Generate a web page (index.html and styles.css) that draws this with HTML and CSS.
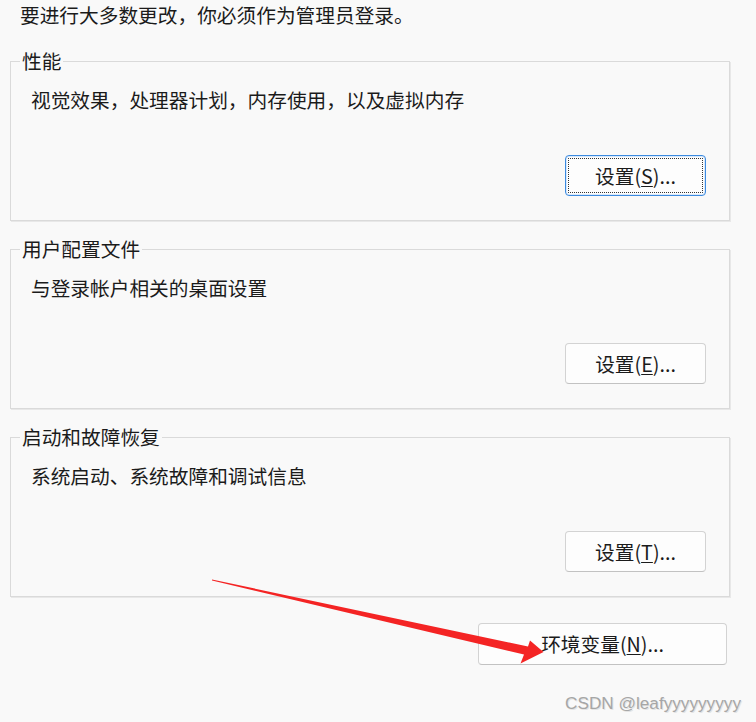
FILE: index.html
```html
<!DOCTYPE html>
<html lang="zh-CN">
<head>
    <meta charset="UTF-8">
    <title>系统属性 - 高级</title>
    <link rel="stylesheet" href="styles.css">
</head>
<body>
    <div class="page">
        <p class="notice">要进行大多数更改，你必须作为管理员登录。</p>

        <fieldset class="group">
            <legend>性能</legend>
            <p class="desc">视觉效果，处理器计划，内存使用，以及虚拟内存</p>
            <div class="actions">
                <button class="btn focused">设置(<u>S</u>)...</button>
            </div>
        </fieldset>

        <fieldset class="group">
            <legend>用户配置文件</legend>
            <p class="desc">与登录帐户相关的桌面设置</p>
            <div class="actions">
                <button class="btn">设置(<u>E</u>)...</button>
            </div>
        </fieldset>

        <fieldset class="group">
            <legend>启动和故障恢复</legend>
            <p class="desc">系统启动、系统故障和调试信息</p>
            <div class="actions">
                <button class="btn">设置(<u>T</u>)...</button>
            </div>
        </fieldset>

        <div class="bottom-actions">
            <button class="btn wide">环境变量(<u>N</u>)...</button>
        </div>

        <!-- 红色箭头标注 -->
        <svg class="arrow" width="756" height="722" viewBox="0 0 756 722">
            <polygon points="212,579.5 528,646.5 530,640.5 543.5,652 520.5,663.5 524,654.5 212,580.5" fill="#f42424"/>
        </svg>

        <span class="watermark">CSDN @leafyyyyyyyyy</span>
    </div>
</body>
</html>
```

FILE: styles.css
```css
body, html {
    margin: 0;
    padding: 0;
    background-color: #f9f9f9;
}

.page {
    position: relative;
    width: 756px;
    height: 722px;
    overflow: hidden;
    font-family: "Noto Sans CJK SC", "Microsoft YaHei", sans-serif;
    font-size: 19.7px;
    line-height: 24px;
    color: #1b1b1b;
}

/* 顶部提示 */
.notice {
    margin: 0 0 22px 0;
    padding: 3px 0 0 20px;
}

/* 分组框 */
.group {
    box-sizing: border-box;
    width: 720px;
    margin: 0 0 16px 10px;
    padding: 15px 23px 24px 9px;
    border: 1px solid #dadada;
    box-shadow: 1px 1px 0 #e8e8e8;
    min-width: 0;
}

.group legend {
    padding: 0 2px;
    line-height: 24px;
}

.desc {
    margin: 0 0 0 11px;
}

.actions {
    display: flex;
    justify-content: flex-end;
    margin-top: 43px;
}

/* 按钮 */
.btn {
    box-sizing: border-box;
    width: 141px;
    height: 41px;
    padding: 0;
    font: inherit;
    color: #1b1b1b;
    background: #fdfdfd;
    border: 1px solid #d3d3d3;
    border-bottom-color: #c2c2c2;
    border-radius: 4px;
}

.btn u {
    text-underline-offset: 2px;
}

.btn.focused {
    border: 1px solid #3b8ae0;
    box-shadow: inset 0 0 0 1px #d8e8fa;
    outline: 1px dotted #333;
    outline-offset: -4px;
}

.bottom-actions {
    display: flex;
    justify-content: flex-end;
    width: 717px;
    margin: 26px 0 0 10px;
}

.btn.wide {
    width: 249px;
    height: 42px;
}

/* 标注与水印 */
.arrow {
    position: absolute;
    left: 0;
    top: 0;
    pointer-events: none;
}

.watermark {
    position: absolute;
    right: 15px;
    top: 691px;
    font-family: "Liberation Sans", Arial, sans-serif;
    font-size: 17.2px;
    line-height: 24px;
    color: #a6a6a6;
    text-shadow: 1px 1px 0 #e4e4e4;
}
```
